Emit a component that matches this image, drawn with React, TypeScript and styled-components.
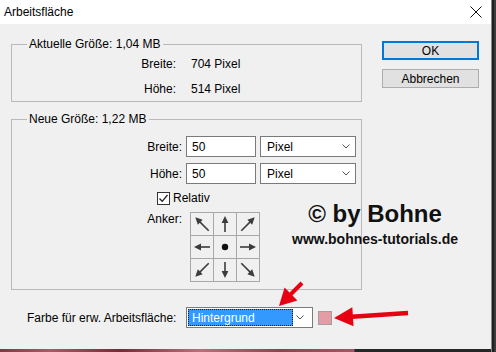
import React from 'react';
import styled, { createGlobalStyle } from 'styled-components';

const GlobalStyle = createGlobalStyle`
  html, body {
    margin: 0;
    padding: 0;
  }
  body {
    background: #1d1d1d;
    font-family: "Liberation Sans", Arial, sans-serif;
    font-size: 12px;
    color: #000;
  }
  * {
    box-sizing: border-box;
  }
`;

const Screen = styled.div`
  width: 496px;
  height: 352px;
  overflow: hidden;
  display: grid;
  grid-template-columns: 491px 5px;
  grid-template-rows: 349px 3px;
  background: #1d1d1d;
`;

const Dialog = styled.div`
  position: relative;
  display: flex;
  flex-direction: column;
  background: #f0f0f0;
`;

const RightEdge = styled.div`
  grid-row: 1 / span 2;
  grid-column: 2;
  background: linear-gradient(to right, #8a8a8a 0 1px, #202020 1px 3px, #3b3b3b 3px);
`;

const BottomEdge = styled.div`
  background: linear-gradient(
    90deg,
    #7d3a44 0,
    #a85a67 50px,
    #6f2f38 120px,
    #b4727c 200px,
    #8a4450 280px,
    #9b5a63 354px,
    #262626 355px
  );
`;

const TitleBar = styled.div`
  flex: none;
  height: 24px;
  background: #fff;
  display: flex;
  align-items: center;
  justify-content: space-between;
  padding: 0 9px 0 4px;
`;

const TitleText = styled.span`
  line-height: 14px;
`;

const Body = styled.div`
  padding: 13px 12px 0 11px;
  display: flex;
  flex-direction: column;
`;

const TopArea = styled.div`
  display: grid;
  grid-template-columns: 351px 97px;
  column-gap: 20px;
  align-items: start;
`;

const LeftColumn = styled.div`
  display: flex;
  flex-direction: column;
  gap: 10px;
`;

const Group = styled.fieldset<{ $pad?: string }>`
  margin: 0;
  min-width: 0;
  border: 1px solid #b9b9b9;
  padding: ${p => p.$pad || '0 5px 0 15px'};
`;

const Legend = styled.legend`
  padding: 0 3px 0 2px;
  line-height: 14px;
`;

const InfoGrid = styled.div`
  display: grid;
  grid-template-columns: 149px auto;
  column-gap: 15px;
  grid-auto-rows: 25px;
  align-items: center;
`;

const InfoLabel = styled.span`
  text-align: right;
`;

const FieldStack = styled.div`
  display: flex;
  flex-direction: column;
  gap: 6px;
  padding: 10px 0 7px;
`;

const FieldRow = styled.div<{ $align?: string }>`
  display: flex;
  align-items: ${p => p.$align || 'center'};
  gap: 4px;
`;

const FieldLabel = styled.span<{ $gap?: number }>`
  width: 155px;
  text-align: right;
  line-height: 14px;
  margin-right: ${p => p.$gap || 0}px;
`;

const TextBox = styled.div`
  width: 70px;
  height: 21px;
  border: 1px solid #7a7a7a;
  background: #fff;
  padding: 0 5px;
  display: flex;
  align-items: center;
`;

const Select = styled.div<{ $width: number; $pad?: string }>`
  width: ${p => p.$width}px;
  height: 21px;
  border: 1px solid #7a7a7a;
  background: #fff;
  display: flex;
  align-items: center;
  justify-content: space-between;
  padding: ${p => p.$pad || '0 5px 0 6px'};
`;

const Highlight = styled.div`
  width: 105px;
  height: 17px;
  background: #3399ff;
  color: #fff;
  outline: 1px dotted #1a1a1a;
  outline-offset: -1px;
  display: flex;
  align-items: center;
  padding-left: 4px;
`;

const CheckRow = styled.label`
  display: flex;
  align-items: center;
  gap: 3px;
  padding-left: 130px;
  height: 16px;
`;

const CheckBox = styled.span`
  width: 13px;
  height: 13px;
  border: 1px solid #333;
  background: #fff;
  display: flex;
  align-items: center;
  justify-content: center;
`;

const AnchorGrid = styled.div`
  display: grid;
  grid-template-columns: repeat(3, 22px);
  grid-template-rows: repeat(3, 22px);
  gap: 1px;
  padding: 1px;
  background: #a8a8a8;
`;

const AnchorCell = styled.div`
  background: #f0f0f0;
  display: flex;
  align-items: center;
  justify-content: center;
`;

const ButtonColumn = styled.div`
  display: flex;
  flex-direction: column;
  gap: 9px;
  padding-top: 4px;
`;

const Button = styled.div<{ $default?: boolean }>`
  height: 19px;
  background: #e1e1e1;
  border: ${p => (p.$default ? '2px solid #0078d7' : '1px solid #adadad')};
  display: flex;
  align-items: center;
  justify-content: center;
`;

const ColorRow = styled.div`
  display: flex;
  align-items: center;
  margin-top: 17px;
  padding-left: 16px;
`;

const ColorLabel = styled.span`
  width: 159px;
`;

const Swatch = styled.div`
  width: 14px;
  height: 14px;
  margin-left: 5px;
  background: #e69ca4;
  border: 1px solid #a0a0a0;
`;

const Watermark = styled.div`
  position: absolute;
  left: 275px;
  top: 201px;
  width: 200px;
  text-align: center;
  font-weight: bold;
  color: #111;
  pointer-events: none;
`;

const WatermarkTitle = styled.div`
  font-size: 24px;
  line-height: 26px;
`;

const WatermarkUrl = styled.div`
  font-size: 14px;
  line-height: 16px;
  margin-top: 4px;
`;

const ArrowLayer = styled.svg`
  position: absolute;
  left: 270px;
  top: 275px;
  pointer-events: none;
`;

const Chevron = () => (
  <svg width="8" height="5" viewBox="0 0 8 5">
    <polyline points="0.5,0.5 4,4 7.5,0.5" fill="none" stroke="#555" strokeWidth="1" />
  </svg>
);

const CloseIcon = () => (
  <svg width="12" height="12" viewBox="0 0 12 12">
    <path d="M0.5 0.5 L11.5 11.5 M11.5 0.5 L0.5 11.5" stroke="#111" strokeWidth="1" />
  </svg>
);

const CheckMark = () => (
  <svg width="11" height="11" viewBox="0 0 11 11">
    <polyline points="1.5,5.5 4.2,8.3 9.5,2" fill="none" stroke="#222" strokeWidth="1.3" />
  </svg>
);

// angle 0 = up, rotated clockwise
const AnchorArrow = ({ angle }: { angle: number }) => {
  const h = angle % 90 === 0 ? 8 : 9.5;
  return (
    <svg width="22" height="22" viewBox="0 0 22 22">
      <g transform={`rotate(${angle} 11 11)`}>
        <line x1="11" y1={11 + h} x2="11" y2={11 - h + 5} stroke="#3c3c3c" strokeWidth="1.6" />
        <polygon points={`11,${11 - h} 7.6,${11 - h + 7} 14.4,${11 - h + 7}`} fill="#3c3c3c" />
      </g>
    </svg>
  );
};

const anchors: (number | null)[] = [315, 0, 45, 270, null, 90, 225, 180, 135];

export default function App() {
  return (
    <>
      <GlobalStyle />
      <Screen>
        <Dialog>
          <TitleBar>
            <TitleText>Arbeitsfläche</TitleText>
            <CloseIcon />
          </TitleBar>
          <Body>
            <TopArea>
              <LeftColumn>
                <Group>
                  <Legend>Aktuelle Größe: 1,04 MB</Legend>
                  <InfoGrid>
                    <InfoLabel>Breite:</InfoLabel>
                    <span>704 Pixel</span>
                    <InfoLabel>Höhe:</InfoLabel>
                    <span>514 Pixel</span>
                  </InfoGrid>
                </Group>
                <Group>
                  <Legend>Neue Größe: 1,22 MB</Legend>
                  <FieldStack>
                    <FieldRow>
                      <FieldLabel>Breite:</FieldLabel>
                      <TextBox>50</TextBox>
                      <Select $width={96}>
                        <span>Pixel</span>
                        <Chevron />
                      </Select>
                    </FieldRow>
                    <FieldRow>
                      <FieldLabel>Höhe:</FieldLabel>
                      <TextBox>50</TextBox>
                      <Select $width={96}>
                        <span>Pixel</span>
                        <Chevron />
                      </Select>
                    </FieldRow>
                    <CheckRow>
                      <CheckBox>
                        <CheckMark />
                      </CheckBox>
                      <span>Relativ</span>
                    </CheckRow>
                    <FieldRow $align="flex-start">
                      <FieldLabel $gap={4}>Anker:</FieldLabel>
                      <AnchorGrid>
                        {anchors.map((a, i) => (
                          <AnchorCell key={i}>
                            {a === null ? (
                              <svg width="8" height="8" viewBox="0 0 8 8">
                                <circle cx="4" cy="4" r="3.2" fill="#111" />
                              </svg>
                            ) : (
                              <AnchorArrow angle={a} />
                            )}
                          </AnchorCell>
                        ))}
                      </AnchorGrid>
                    </FieldRow>
                  </FieldStack>
                </Group>
              </LeftColumn>
              <ButtonColumn>
                <Button $default>OK</Button>
                <Button>Abbrechen</Button>
              </ButtonColumn>
            </TopArea>
            <ColorRow>
              <ColorLabel>Farbe für erw. Arbeitsfläche:</ColorLabel>
              <Select $width={127} $pad="0 8px 0 1px">
                <Highlight>Hintergrund</Highlight>
                <Chevron />
              </Select>
              <Swatch />
            </ColorRow>
          </Body>
          <Watermark>
            <WatermarkTitle>© by Bohne</WatermarkTitle>
            <WatermarkUrl>www.bohnes-tutorials.de</WatermarkUrl>
          </Watermark>
          <ArrowLayer width="145" height="60" viewBox="270 275 145 60">
            <line x1="302" y1="283" x2="290" y2="295" stroke="#e60012" strokeWidth="4" />
            <polygon points="279,306 297.4,300.4 284.6,287.6" fill="#e60012" />
            <line x1="408" y1="313" x2="352" y2="316.8" stroke="#e60012" strokeWidth="4.5" />
            <polygon points="334,318 353.5,326.2 352.3,307.2" fill="#e60012" />
          </ArrowLayer>
        </Dialog>
        <RightEdge />
        <BottomEdge />
      </Screen>
    </>
  );
}
